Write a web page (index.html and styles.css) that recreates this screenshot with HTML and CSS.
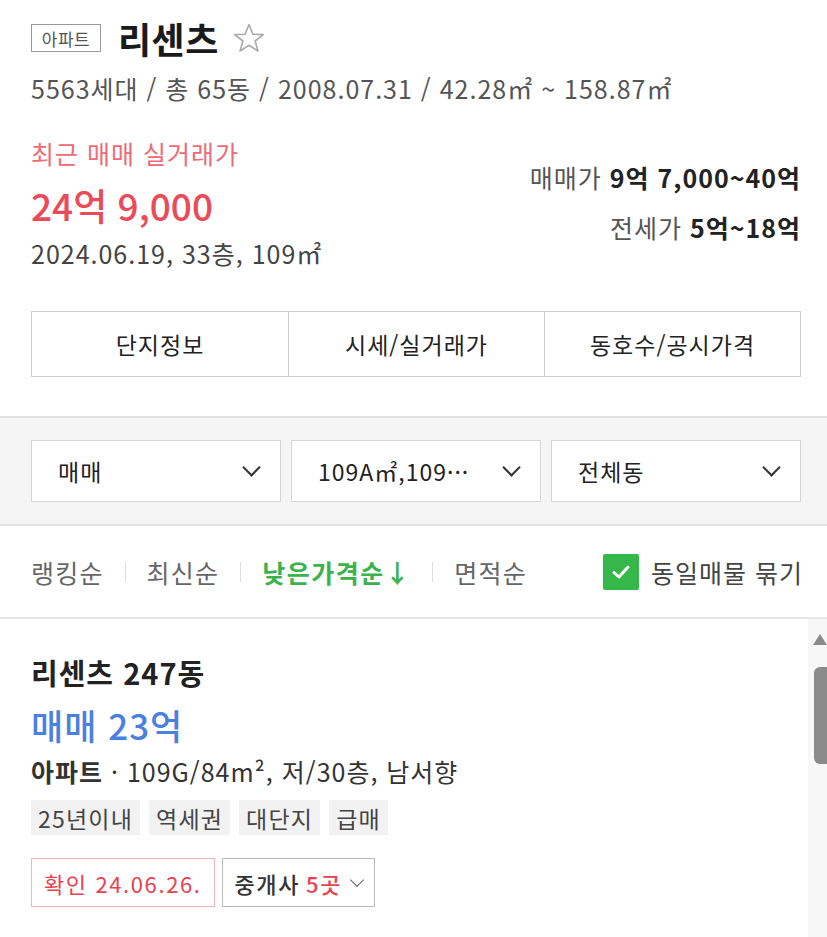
FILE: index.html
```html
<!DOCTYPE html>
<html lang="ko">
<head>
    <meta charset="UTF-8">
    <meta name="viewport" content="width=device-width, initial-scale=1.0">
    <title>리센츠</title>
    <link rel="stylesheet" href="styles.css">
</head>
<body>
    <section class="summary">
        <div class="title-row">
            <span class="type-badge">아파트</span>
            <h1 class="complex-name">리센츠</h1>
            <svg class="star" width="34" height="32" viewBox="0 0 34 32">
                <path d="M17 2.5 L20.9 12.2 L31.3 12.6 L23.1 19 L26 29 L17 23.3 L8 29 L10.9 19 L2.7 12.6 L13.1 12.2 Z" fill="none" stroke="#aaa" stroke-width="1.6" stroke-linejoin="round"/>
            </svg>
        </div>
        <p class="complex-meta">5563세대 / 총 65동 / 2008.07.31 / 42.28㎡ ~ 158.87㎡</p>

        <div class="price-row">
            <div class="recent">
                <p class="recent-label">최근 매매 실거래가</p>
                <p class="recent-price">24억 9,000</p>
                <p class="recent-detail">2024.06.19, 33층, 109㎡</p>
            </div>
            <div class="ranges">
                <p>매매가 <strong>9억 7,000~40억</strong></p>
                <p>전세가 <strong>5억~18억</strong></p>
            </div>
        </div>

        <div class="tabs">
            <a class="tab">단지정보</a>
            <a class="tab">시세/실거래가</a>
            <a class="tab">동호수/공시가격</a>
        </div>
    </section>

    <section class="filters">
        <div class="select">매매<span class="chev"></span></div>
        <div class="select">109A㎡,109···<span class="chev"></span></div>
        <div class="select">전체동<span class="chev"></span></div>
    </section>

    <section class="sort-row">
        <ul class="sort-list">
            <li>랭킹순</li>
            <li>최신순</li>
            <li class="active">낮은가격순↓</li>
            <li>면적순</li>
        </ul>
        <label class="group-check">
            <span class="checkbox">
                <svg width="20" height="16" viewBox="0 0 20 16">
                    <path d="M3 8.5 L8 13 L17 3" fill="none" stroke="#fff" stroke-width="3" stroke-linecap="round" stroke-linejoin="round"/>
                </svg>
            </span>
            동일매물 묶기
        </label>
    </section>

    <section class="listing">
        <div class="article">
            <h2 class="article-title">리센츠 247동</h2>
            <p class="article-price">매매 23억</p>
            <p class="article-spec"><strong>아파트</strong> · 109G/84m², 저/30층, 남서향</p>
            <div class="tags">
                <span class="tag">25년이내</span>
                <span class="tag">역세권</span>
                <span class="tag">대단지</span>
                <span class="tag">급매</span>
            </div>
            <div class="article-actions">
                <span class="confirm">확인 24.06.26.</span>
                <span class="agents">중개사 <em>5곳</em><span class="chev small"></span></span>
            </div>
        </div>
        <div class="scrollbar">
            <span class="scroll-arrow"></span>
            <span class="scroll-thumb"></span>
        </div>
    </section>
</body>
</html>
```

FILE: styles.css
```css
body {
    margin: 0;
    padding: 0;
    font-family: "Noto Sans CJK KR", "Noto Sans", sans-serif;
    color: #222;
    background: #fff;
    overflow: hidden;
}

p, h1, h2, ul {
    margin: 0;
    padding: 0;
}

.summary {
    padding: 18px 26px 39px 31px;
}

.title-row {
    display: flex;
    align-items: center;
    height: 40px;
}

.type-badge {
    display: inline-flex;
    align-items: center;
    justify-content: center;
    width: 68px;
    height: 26px;
    border: 1px solid #999;
    font-size: 17px;
    color: #555;
    letter-spacing: 0.5px;
    margin-right: 17px;
}

.complex-name {
    font-size: 36px;
    font-weight: 700;
    line-height: 40px;
    color: #1a1a1a;
    letter-spacing: 0.5px;
}

.star {
    margin-left: 13px;
}

.complex-meta {
    margin-top: 15px;
    font-size: 25px;
    line-height: 30px;
    color: #555;
    letter-spacing: 1px;
}

.price-row {
    display: flex;
    justify-content: space-between;
    margin-top: 35px;
}

.recent-label {
    font-size: 25px;
    line-height: 30px;
    color: #ee6a76;
    letter-spacing: 1px;
}

.recent-price {
    margin-top: 15px;
    font-size: 37px;
    line-height: 44px;
    font-weight: 500;
    color: #ea4b58;
}

.recent-detail {
    margin-top: 11px;
    font-size: 25px;
    line-height: 30px;
    color: #444;
    letter-spacing: 1px;
}

.ranges {
    padding-top: 24px;
    text-align: right;
}

.ranges p {
    font-size: 25px;
    line-height: 30px;
    color: #555;
    margin-bottom: 20px;
    letter-spacing: 1px;
}

.ranges strong {
    color: #222;
    font-weight: 700;
}

.tabs {
    display: grid;
    grid-template-columns: 1fr 1fr 1fr;
    margin-top: 43px;
    border: 1px solid #ccc;
}

.tab {
    display: flex;
    align-items: center;
    justify-content: center;
    height: 64px;
    font-size: 23px;
    color: #222;
    letter-spacing: 1px;
}

.tab + .tab {
    border-left: 1px solid #ccc;
}

.filters {
    display: flex;
    gap: 10px;
    padding: 22px 26px 22px 31px;
    background: #f5f5f5;
    border-top: 2px solid #e2e2e2;
    border-bottom: 2px solid #e2e2e2;
}

.select {
    flex: 1;
    display: flex;
    align-items: center;
    justify-content: space-between;
    height: 60px;
    padding: 0 22px 0 26px;
    background: #fff;
    border: 1px solid #d6d6d6;
    font-size: 23px;
    color: #222;
    letter-spacing: 1px;
}

.chev {
    width: 11px;
    height: 11px;
    border-right: 2px solid #333;
    border-bottom: 2px solid #333;
    transform: rotate(45deg);
    margin-top: -7px;
}

.chev.small {
    width: 9px;
    height: 9px;
    border-color: #666;
    border-width: 0 1.5px 1.5px 0;
    margin: -6px 0 0 10px;
}

.sort-row {
    display: flex;
    align-items: center;
    justify-content: space-between;
    height: 91px;
    padding: 0 24px 0 31px;
    border-bottom: 2px solid #e6e6e6;
}

.sort-list {
    display: flex;
    list-style: none;
    font-size: 25px;
    color: #666;
    letter-spacing: 1.2px;
}

.sort-list li {
    line-height: 20px;
}

.sort-list li + li {
    border-left: 1px solid #ddd;
    margin-left: 21px;
    padding-left: 21px;
}

.sort-list .active {
    color: #3cb24f;
    font-weight: 700;
    letter-spacing: 1.5px;
}

.group-check {
    display: flex;
    align-items: center;
    gap: 12px;
    font-size: 25px;
    color: #444;
    letter-spacing: 1px;
}

.checkbox {
    display: flex;
    align-items: center;
    justify-content: center;
    width: 36px;
    height: 36px;
    background: #36b74a;
    border-radius: 2px;
}

.listing {
    position: relative;
    padding: 34px 26px 40px 31px;
}

.article-title {
    font-size: 29px;
    line-height: 38px;
    font-weight: 700;
    color: #222;
    letter-spacing: 1px;
}

.article-price {
    margin-top: 13px;
    font-size: 35px;
    line-height: 42px;
    font-weight: 500;
    color: #4a80e0;
    letter-spacing: 1px;
}

.article-spec {
    margin-top: 10px;
    font-size: 25px;
    line-height: 30px;
    color: #333;
    letter-spacing: 1px;
}

.article-spec strong {
    font-weight: 700;
}

.tags {
    display: flex;
    gap: 9px;
    margin-top: 14px;
}

.tag {
    display: inline-flex;
    align-items: center;
    height: 35px;
    padding: 0 7px;
    background: #f2f2f2;
    font-size: 23px;
    color: #444;
    letter-spacing: 1.2px;
}

.article-actions {
    display: flex;
    gap: 7px;
    margin-top: 23px;
}

.confirm, .agents {
    display: inline-flex;
    align-items: center;
    height: 47px;
    padding: 0 12px;
    font-size: 22px;
    letter-spacing: 1.6px;
}

.confirm {
    border: 1px solid #f5b4ba;
    color: #e8424f;
}

.agents {
    border: 1px solid #bbb;
    color: #333;
    font-weight: 500;
}

.agents em {
    font-style: normal;
    color: #e8424f;
    margin-left: 6px;
}

.scrollbar {
    position: absolute;
    top: 0;
    right: 0;
    width: 19px;
    height: 100%;
    background: #f7f7f7;
}

.scroll-arrow {
    position: absolute;
    top: 15px;
    right: 0;
    width: 0;
    height: 0;
    border-left: 7px solid transparent;
    border-right: 7px solid transparent;
    border-bottom: 11px solid #8a8a8a;
}

.scroll-thumb {
    position: absolute;
    top: 48px;
    right: 0;
    width: 13px;
    height: 97px;
    background: #8a8a8a;
    border-radius: 6px 0 0 6px;
}
```
